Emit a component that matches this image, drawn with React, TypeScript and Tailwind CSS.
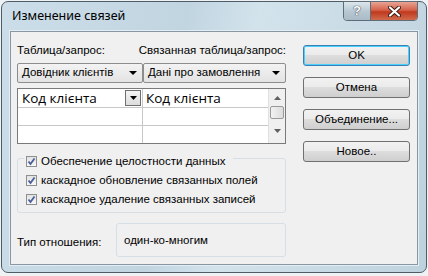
import React from 'react'

const btnBg =
  'bg-[linear-gradient(to_bottom,#f2f2f2_0%,#ebebeb_45%,#dddddd_50%,#cfcfcf_100%)]'

function Check() {
  return (
    <span className="flex h-[11px] w-[11px] shrink-0 items-center justify-center border border-[#8f8f8f] bg-[linear-gradient(to_bottom,#e2e2e2,#f8f8f8)]">
      <svg width="9" height="9" viewBox="0 0 9 9">
        <path d="M1.5 4.5 L3.5 7 L7.5 1.5" fill="none" stroke="#4a5f97" strokeWidth="1.8" />
      </svg>
    </span>
  )
}

function Combo({ text, className }: { text: string; className: string }) {
  return (
    <div
      className={`flex h-[20px] items-center justify-between rounded-[2px] border border-[#8d8d8d] bg-[linear-gradient(to_bottom,#f3f3f3,#e3e3e3)] pl-[4px] pr-[5px] text-[11.5px] whitespace-nowrap text-black ${className}`}
    >
      <span>{text}</span>
      <svg width="8" height="4" viewBox="0 0 8 4">
        <path d="M0 0 H8 L4 4 Z" fill="#000" />
      </svg>
    </div>
  )
}

function Btn({ label, def }: { label: string; def?: boolean }) {
  return (
    <button
      className={`flex h-[21px] w-[107px] items-center justify-center rounded-[3px] border text-[11.5px] text-black ${btnBg} ${
        def ? 'border-[#3c7fb1] shadow-[inset_0_0_0_1px_#48d1ff]' : 'border-[#707070]'
      }`}
    >
      {label}
    </button>
  )
}

export default function App() {
  return (
    <div
      className="h-[276px] w-[428px] bg-[#eef2f4] p-[1px]"
      style={{ fontFamily: '"Liberation Sans", Arial, sans-serif' }}
    >
      <div className="relative flex h-[272px] w-[426px] flex-col rounded-[7px] border border-[#4e5c66] bg-[linear-gradient(100deg,#cbdde8_0%,#c1d5e1_40%,#d3e3ec_55%,#bed2de_100%)]">
        {/* title bar */}
        <div className="flex h-[29px] items-center pl-[10px]">
          <span className="text-[12.5px] text-black" style={{ fontFamily: '"Noto Sans", sans-serif' }}>
            Изменение связей
          </span>
        </div>
        <div className="absolute right-[8px] top-[-1px] flex h-[20px] overflow-hidden rounded-b-[4px] border border-[#5e6d77]">
          <div className="flex w-[27px] items-center justify-center border-r border-[#5e6d77] bg-[linear-gradient(to_bottom,#dde7ec,#b9c9d3_50%,#a8bbc6)]">
            <span className="text-[13px] font-bold text-white [text-shadow:0_0_1px_#334,0_0_1px_#334]">?</span>
          </div>
          <div className="flex w-[46px] items-center justify-center bg-[linear-gradient(to_bottom,#e8a494,#d5624a_45%,#c0391e_55%,#d06a4c)]">
            <svg width="13" height="11" viewBox="0 0 13 11">
              <path d="M2 1.5 L11 9.5 M11 1.5 L2 9.5" stroke="#3a1a14" strokeWidth="4" strokeLinecap="round" />
              <path d="M2 1.5 L11 9.5 M11 1.5 L2 9.5" stroke="#fff" strokeWidth="2.2" strokeLinecap="round" />
            </svg>
          </div>
        </div>

        {/* client area */}
        <div className="mx-[8px] mb-[7px] flex flex-1 border border-[#8798a4] outline outline-1 outline-[#e4edf2]">
          <div className="flex flex-1 gap-[17px] bg-[#f0f0f0] pl-[6px] pt-[12px]">
            <div className="flex w-[269px] flex-col">
              <div className="flex h-[13px] items-center whitespace-nowrap text-[11.5px] text-black">
                <span className="w-[126px]">Таблица/запрос:</span>
                <span className="pl-[2px]">Связанная таблица/запрос:</span>
              </div>
              <div className="mt-[6px] flex">
                <Combo text="Довідник клієнтів" className="w-[126px]" />
                <Combo text="Дані про замовлення" className="w-[143px]" />
              </div>
              {/* grid */}
              <div className="mt-[5px] flex h-[56px] border border-[#7a7a7a] bg-white">
                <div className="flex flex-1 flex-col">
                  {[0, 1, 2].map((r) => (
                    <div key={r} className={`flex ${r === 0 ? 'h-[19px]' : 'h-[18px]'} ${r < 2 ? 'border-b border-[#c8c8c8]' : ''}`}>
                      <div className="flex w-[125px] items-center justify-between border-r border-[#c8c8c8] pl-[4px] pr-[1px]">
                        {r === 0 && (
                          <>
                            <span className="text-[13.5px] text-black" style={{ fontFamily: '"Open Sans", sans-serif' }}>Код клієнта</span>
                            <span className="flex h-[16px] w-[16px] items-center justify-center border border-[#6f6f6f] bg-[linear-gradient(to_bottom,#f4f4f4,#dcdcdc)]">
                              <svg width="7" height="4" viewBox="0 0 7 4">
                                <path d="M0 0 H7 L3.5 4 Z" fill="#000" />
                              </svg>
                            </span>
                          </>
                        )}
                      </div>
                      <div className="flex flex-1 items-center pl-[3px]">
                        {r === 0 && (
                          <span className="text-[13.5px] text-black" style={{ fontFamily: '"Open Sans", sans-serif' }}>Код клієнта</span>
                        )}
                      </div>
                    </div>
                  ))}
                </div>
                {/* scrollbar */}
                <div className="flex w-[17px] flex-col items-center border-l border-[#e0e0e0] bg-[#f0f0f0]">
                  <div className="flex h-[17px] items-center justify-center">
                    <svg width="7" height="4" viewBox="0 0 7 4">
                      <path d="M0 4 H7 L3.5 0 Z" fill="#606060" />
                    </svg>
                  </div>
                  <div className="h-[13px] w-[14px] rounded-[2px] border border-[#9a9a9a] bg-[linear-gradient(to_right,#f2f2f2,#dcdcdc)]" />
                  <div className="flex flex-1 items-center justify-center">
                    <svg width="7" height="4" viewBox="0 0 7 4">
                      <path d="M0 0 H7 L3.5 4 Z" fill="#606060" />
                    </svg>
                  </div>
                </div>
              </div>

              {/* checkbox group */}
              <div className="relative mt-[14px] flex h-[55px] flex-col gap-[8px] rounded-[3px] border border-[#d5dfe5] pl-[8px] pt-[16px] text-[11.5px] whitespace-nowrap text-black">
                <div className="absolute left-[6px] top-[-3px] flex h-[11px] items-center gap-[4px] bg-[#f0f0f0] pl-[2px] pr-[8px]">
                  <Check />
                  <span>Обеспечение целостности данных</span>
                </div>
                <div className="flex h-[11px] items-center gap-[4px]">
                  <Check />
                  <span>каскадное обновление связанных полей</span>
                </div>
                <div className="flex h-[11px] items-center gap-[4px]">
                  <Check />
                  <span>каскадное удаление связанных записей</span>
                </div>
              </div>

              {/* relation type */}
              <div className="mt-[10px] flex items-center text-[11.5px] text-black">
                <span className="w-[99px] pt-[5px]">Тип отношения:</span>
                <div className="flex h-[34px] flex-1 rounded-[3px] border border-[#d5dfe5] pl-[7px] pt-[8px]">
                  <span>один-ко-многим</span>
                </div>
              </div>
            </div>

            {/* buttons */}
            <div className="flex flex-col gap-[11px] pt-[1px]">
              <Btn label="OK" def />
              <Btn label="Отмена" />
              <Btn label="Объединение..." />
              <Btn label="Новое.." />
            </div>
          </div>
        </div>
      </div>
    </div>
  )
}
